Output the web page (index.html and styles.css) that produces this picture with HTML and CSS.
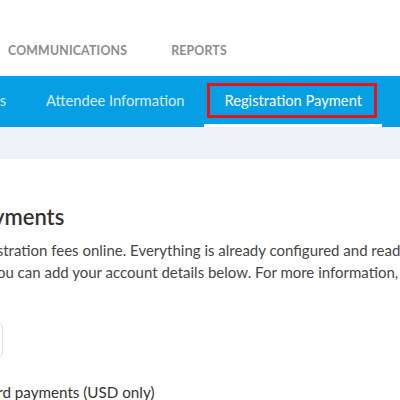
FILE: index.html
```html
<!DOCTYPE html>
<html lang="en">

<head>
    <meta charset="UTF-8">
    <meta name="viewport" content="width=device-width, initial-scale=1.0">
    <link rel="stylesheet" href="styles.css">
</head>

<body>
    <nav class="top-nav">
        <a href="#">COMMUNICATIONS</a>
        <a href="#">REPORTS</a>
    </nav>

    <nav class="sub-nav">
        <a class="tab" href="#">Event Details</a>
        <a class="tab" href="#">Attendee Information</a>
        <a class="tab active" href="#">Registration Payment<span class="highlight"></span></a>
    </nav>

    <div class="band"></div>

    <main class="page">
        <h1>Online Payments</h1>
        <p class="intro">
            To process registration fees online. Everything is already configured and ready to go.<br>
            Alternatively, you can add your account details below. For more information, see our guide.
        </p>

        <div class="row">
            <button class="select" type="button">Default account</button>
        </div>

        <label class="check">Allow credit card payments (USD only)</label>
    </main>
</body>
</html>
```

FILE: styles.css
```css
html, body {
    margin: 0;
    padding: 0;
    overflow: hidden;
}
body {
    font-family: Lato, "Open Sans", sans-serif;
    color: #333;
    background: #fff;
}
a {
    text-decoration: none;
}

.top-nav {
    display: flex;
    align-items: center;
    gap: 44px;
    height: 76px;
    padding: 24px 0 0 8px;
    box-sizing: border-box;
}
.top-nav a {
    font-size: 12.3px;
    font-weight: bold;
    color: #8c8c8c;
    letter-spacing: 0.2px;
}

.sub-nav {
    display: flex;
    justify-content: flex-end; /* overflow pushes the first tab off the left edge */
    height: 51px;
    padding-right: 18px;
    background: #069fe4;
}
.tab {
    position: relative;
    display: flex;
    align-items: center;
    flex-shrink: 0;
    padding: 0 20px;
    font-size: 14.7px;
    color: #d6eefb;
    border-bottom: 3px solid transparent;
}
.tab.active {
    color: #fff;
    border-bottom-color: #fff;
}
.highlight {
    position: absolute;
    left: 3px;
    right: 5px;
    top: 7px;
    height: 35px;
    box-sizing: border-box;
    border: 3px solid #e8141b;
}

.band {
    height: 32px;
    background: #eef1f6;
}

.page {
    margin-left: -101px;
    padding-top: 44px;
}
h1 {
    margin: 0;
    font-size: 22px;
    line-height: 28px;
    font-weight: 600;
    color: #333;
}
.intro {
    margin: 8px 0 0;
    font-size: 15px;
    line-height: 22px;
    color: #464646;
    white-space: nowrap;
}
.row {
    margin-top: 40px;
}
.select {
    width: 104px;
    height: 34px;
    border: 1px solid #dcdfe4;
    border-radius: 4px;
    background: #fff;
    font-family: inherit;
    font-size: 14px;
    color: #333;
}
.check {
    display: block;
    margin-top: 22px;
    font-size: 15.2px;
    line-height: 22px;
    color: #333;
}
```
